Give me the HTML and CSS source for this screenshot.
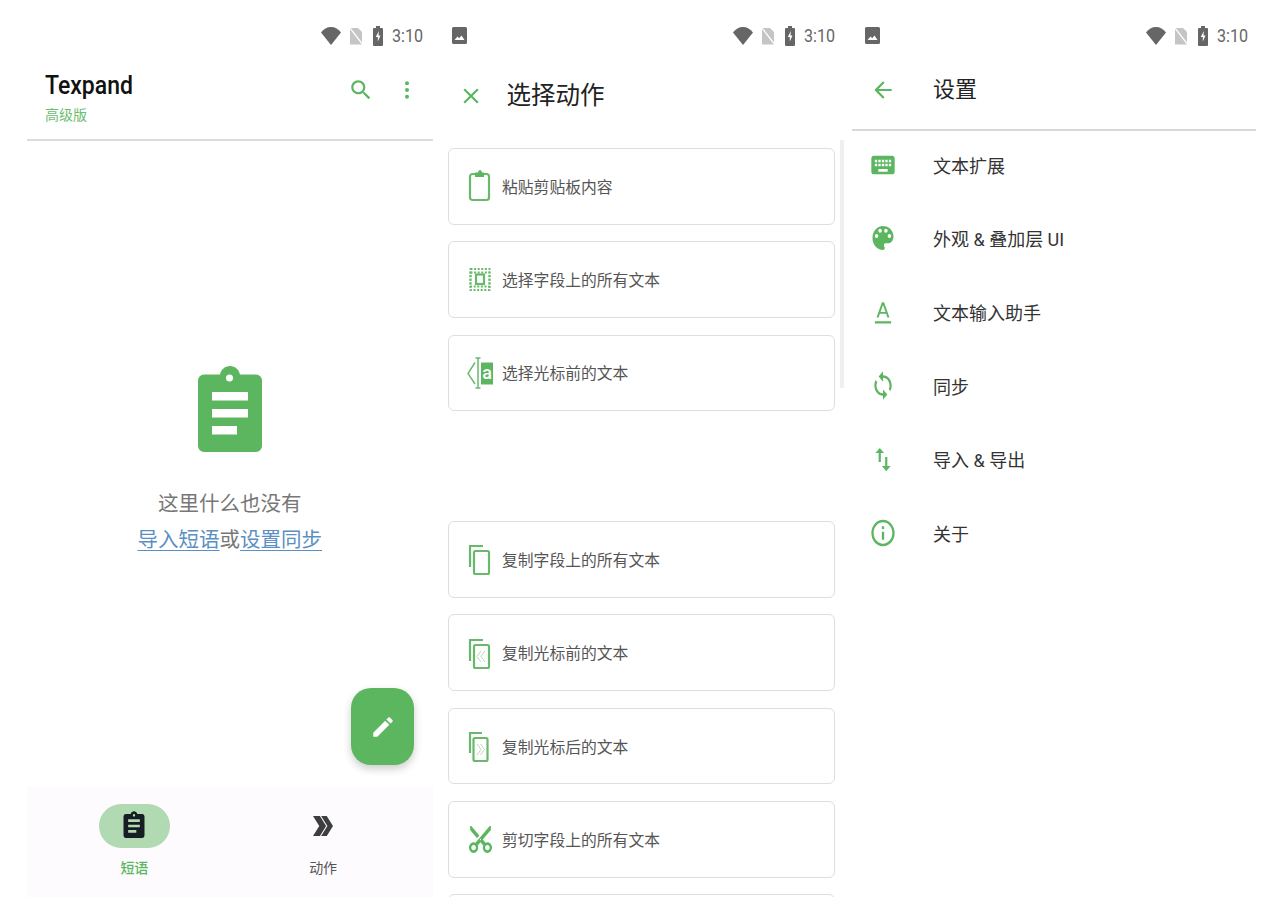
FILE: index.html
```html
<!DOCTYPE html>
<html lang="zh">
<head>
<meta charset="utf-8">
<title>Texpand</title>
<link rel="stylesheet" href="styles.css">
</head>
<body>
<svg class="defs" aria-hidden="true">
  <symbol id="wifi" viewBox="0 0 20 18"><path d="M10 18 0 5.500C2.600 2 6 0 10 0s7.400 2 10 5.500z"/></symbol>
  <symbol id="nosim" viewBox="0 0 14 18"><path d="M1 1h8l4 4v12.500H1z" opacity=".38"/><path d="M0 .8 1 0l13 16.800-1 .9z" fill="#fff"/></symbol>
  <symbol id="batt" viewBox="0 0 10 20"><path fill-rule="evenodd" d="M3 0h4v2h2a1 1 0 0 1 1 1v16a1 1 0 0 1-1 1H1a1 1 0 0 1-1-1V3a1 1 0 0 1 1-1h2zM5.800 5 2.800 11h2v4.500l2.700-6h-2z"/></symbol>
  <symbol id="image" viewBox="0 0 15 18"><path fill-rule="evenodd" d="M1.500 0h12A1.500 1.500 0 0 1 15 1.500v14a1.500 1.500 0 0 1-1.500 1.500h-12A1.500 1.500 0 0 1 0 15.500v-14A1.500 1.500 0 0 1 1.500 0zM2.500 13h10L9.500 8.500 7.200 11.300 5.500 9.500z"/></symbol>
</svg>

<main class="page">
  <section class="panel">
    <div class="status">
      <span class="status-left"></span>
      <svg class="s-wifi"><use href="#wifi"/></svg><svg class="s-sim"><use href="#nosim"/></svg><svg class="s-batt"><use href="#batt"/></svg><span class="time">3:10</span>
    </div>
    <header class="home-head">
      <div class="brand">
        <div class="brand-name">Texpand</div>
        <div class="brand-sub">高级版</div>
      </div>
      <svg class="head-icon" viewBox="0 0 24 24"><path d="M15.500 14h-.79l-.28-.27C15.410 12.590 16 11.110 16 9.500 16 5.910 13.090 3 9.500 3S3 5.910 3 9.500 5.910 16 9.500 16c1.610 0 3.090-.59 4.230-1.570l.27.28v.79l5 4.990L20.490 19l-4.990-5zm-6 0C7.010 14 5 11.990 5 9.500S7.010 5 9.500 5 14 7.010 14 9.500 11.990 14 9.500 14z"/></svg>
      <svg class="head-icon more" viewBox="0 0 24 24"><circle cx="12" cy="4" r="2.400"/><circle cx="12" cy="12" r="2.400"/><circle cx="12" cy="20" r="2.400"/></svg>
    </header>
    <div class="empty">
      <svg class="empty-icon" viewBox="0 0 64 86">
        <path class="g" d="M22 8.500C23 3.500 27 0 32 0s9 3.500 10 8.500H58a6 6 0 0 1 6 6V80a6 6 0 0 1-6 6H6a6 6 0 0 1-6-6V14.500a6 6 0 0 1 6-6z"/>
        <circle class="w" cx="31.500" cy="12" r="3.500"/>
        <rect class="w" x="14" y="26" width="36" height="8.500"/>
        <rect class="w" x="14" y="43" width="36" height="8.500"/>
        <rect class="w" x="14" y="60" width="25" height="8.500"/>
      </svg>
      <p class="empty-title">这里什么也没有</p>
      <p class="empty-links"><a class="link">导入短语</a>或<a class="link">设置同步</a></p>
    </div>
    <button class="fab" type="button" aria-label="编辑">
      <svg viewBox="0 0 24 24"><path d="M3 17.250V21h3.750L17.810 9.940l-3.750-3.750L3 17.250zM20.710 7.040c.39-.39.39-1.020 0-1.410l-2.340-2.340c-.39-.39-1.020-.39-1.410 0l-1.830 1.830 3.750 3.750 1.830-1.830z"/></svg>
    </button>
    <nav class="bottom-nav">
      <div class="nav-item active">
        <span class="pill"><svg class="tall" viewBox="0 0 24 24" preserveAspectRatio="none"><path d="M19 3h-4.180C14.400 1.840 13.300 1 12 1c-1.300 0-2.400.84-2.820 2H5c-1.100 0-2 .9-2 2v14c0 1.100.9 2 2 2h14c1.100 0 2-.9 2-2V5c0-1.100-.9-2-2-2zm-7 0c.55 0 1 .45 1 1s-.45 1-1 1-1-.45-1-1 .45-1 1-1zm2 14H7v-2h7v2zm3-4H7v-2h10v2zm0-4H7V7h10v2z"/></svg></span>
        <span class="nav-label">短语</span>
      </div>
      <div class="nav-item">
        <span class="pill"><svg viewBox="0 0 24 24"><path d="M4 4h5.500l5 8-5 8H4l5-8zM10.500 4H15l5 8-5 8h-4.500l5-8z"/></svg></span>
        <span class="nav-label">动作</span>
      </div>
    </nav>
  </section>

  <section class="panel">
    <div class="status">
      <svg class="s-image"><use href="#image"/></svg><span class="status-left"></span>
      <svg class="s-wifi"><use href="#wifi"/></svg><svg class="s-sim"><use href="#nosim"/></svg><svg class="s-batt"><use href="#batt"/></svg><span class="time">3:10</span>
    </div>
    <header class="action-head">
      <svg class="close" viewBox="0 0 24 24"><path d="M19 6.410L17.590 5 12 10.590 6.410 5 5 6.410 10.590 12 5 17.590 6.410 19 12 13.410 17.590 19 19 17.590 13.410 12z"/></svg>
      <h1 class="action-title">选择动作</h1>
    </header>
    <div class="scrollbar"></div>
    <div class="cards">
      <div class="card"><svg class="ci" viewBox="0 0 26 32"><rect class="st" x="3" y="4" width="19" height="26" rx="2.500"/><path class="fl" d="M8 2.500h3C11.300 1 12 0 13 0s1.700 1 2 2.500h2V7H8z"/></svg><span>粘贴剪贴板内容</span></div>
      <div class="card"><svg class="ci" viewBox="0 0 26 32"><rect class="dots" x="3.500" y="5" width="19" height="21"/><rect class="dots" x="3.500" y="8.500" width="19" height="14"/><rect class="st" x="9" y="10.500" width="8" height="9.500"/></svg><span>选择字段上的所有文本</span></div>
      <div class="card gap-after"><svg class="ci" viewBox="0 0 26 32"><path class="thin" d="M8 5.500 1 16.500 8 27"/><path class="st-thin" d="M11 1v30M8.500 1h5M8.500 31h5"/><rect class="fl" x="14" y="5.500" width="12" height="22"/><text class="ci-a" x="20" y="22">a</text></svg><span>选择光标前的文本</span></div>
      <div class="card"><svg class="ci" viewBox="0 0 26 32"><path class="st" d="M16 3H3v21"/><rect class="st" x="7" y="8" width="15" height="23" rx="1.500"/></svg><span>复制字段上的所有文本</span></div>
      <div class="card"><svg class="ci" viewBox="0 0 26 32"><path class="st" d="M16 3H3v21"/><rect class="st" x="7" y="8" width="15" height="23" rx="1.500"/><path class="hair" d="M14 14l-4 5.500 4 5.500M18 14l-4 5.500 4 5.500"/></svg><span>复制光标前的文本</span></div>
      <div class="card"><svg class="ci" viewBox="0 0 26 32"><path class="st" d="M15 3H3v20"/><rect class="st" x="6.500" y="8" width="14" height="23" rx="1.500"/><path class="hair" d="M10 14l4 5.500-4 5.500M13.500 14l4 5.500-4 5.500"/></svg><span>复制光标后的文本</span></div>
      <div class="card"><svg class="ci-cut" viewBox="2 2 20 20" preserveAspectRatio="none"><path class="fl" transform="rotate(-90 12 12)" d="M9.640 7.640c.23-.5.36-1.050.36-1.640 0-2.210-1.790-4-4-4S2 3.790 2 6s1.790 4 4 4c.59 0 1.140-.13 1.640-.36L10 12l-2.360 2.360C7.140 14.130 6.590 14 6 14c-2.210 0-4 1.790-4 4s1.790 4 4 4 4-1.790 4-4c0-.59-.13-1.140-.36-1.640L12 14l7 7h3v-1L9.640 7.640zM6 8c-1.100 0-2-.89-2-2s.9-2 2-2 2 .89 2 2-.9 2-2 2zm0 12c-1.100 0-2-.89-2-2s.9-2 2-2 2 .89 2 2-.9 2-2 2zm6-7.500c-.28 0-.5-.22-.5-.5s.22-.5.5-.5.5.22.5.5-.22.5-.5.5zM19 3l-6 6 2 2 7-7V3z"/></svg><span>剪切字段上的所有文本</span></div>
      <div class="card"></div>
    </div>
  </section>

  <section class="panel">
    <div class="status">
      <svg class="s-image"><use href="#image"/></svg><span class="status-left"></span>
      <svg class="s-wifi"><use href="#wifi"/></svg><svg class="s-sim"><use href="#nosim"/></svg><svg class="s-batt"><use href="#batt"/></svg><span class="time">3:10</span>
    </div>
    <header class="set-head">
      <svg class="si" viewBox="0 0 24 24"><path d="M20 11H7.830l5.590-5.590L12 4l-8 8 8 8 1.410-1.410L7.830 13H20v-2z"/></svg>
      <h1 class="set-title">设置</h1>
    </header>
    <ul class="settings">
      <li class="row"><svg class="si si-big" viewBox="0 0 24 24" preserveAspectRatio="none"><path d="M20 5H4c-1.100 0-1.990.9-1.990 2L2 17c0 1.100.9 2 2 2h16c1.100 0 2-.9 2-2V7c0-1.100-.9-2-2-2zm-9 3h2v2h-2V8zm0 3h2v2h-2v-2zM8 8h2v2H8V8zm0 3h2v2H8v-2zm-1 2H5v-2h2v2zm0-3H5V8h2v2zm9 7H8v-2h8v2zm0-4h-2v-2h2v2zm0-3h-2V8h2v2zm3 3h-2v-2h2v2zm0-3h-2V8h2v2z"/></svg><span>文本扩展</span></li>
      <li class="row"><svg class="si si-big" viewBox="0 0 24 24" preserveAspectRatio="none"><path d="M12 3c-4.970 0-9 4.030-9 9s4.030 9 9 9c.83 0 1.500-.67 1.500-1.500 0-.39-.15-.74-.39-1.010-.23-.26-.38-.61-.38-.99 0-.83.67-1.500 1.500-1.500H16c2.760 0 5-2.240 5-5 0-4.420-4.030-8-9-8zm-5.500 9c-.83 0-1.500-.67-1.500-1.500S5.670 9 6.500 9 8 9.670 8 10.500 7.330 12 6.500 12zm3-4C8.670 8 8 7.330 8 6.500S8.670 5 9.500 5s1.500.67 1.500 1.500S10.330 8 9.500 8zm5 0c-.83 0-1.500-.67-1.500-1.500S13.670 5 14.500 5s1.500.67 1.500 1.500S15.330 8 14.500 8zm3 4c-.83 0-1.500-.67-1.500-1.500S16.670 9 17.500 9s1.500.67 1.500 1.500-.67 1.500-1.500 1.500z"/></svg><span>外观 &amp; 叠加层 UI</span></li>
      <li class="row"><svg class="si" viewBox="0 0 24 24"><path d="M4.500 20.500h15v2h-15zM11 3h2l5 14h-2l-1.100-3.300H9.100L8 17H6zm-1.300 9h4.600L12 5.500z"/></svg><span>文本输入助手</span></li>
      <li class="row"><svg class="si si-tall" viewBox="0 0 24 24" preserveAspectRatio="none"><path d="M12 4V1L8 5l4 4V6c3.310 0 6 2.690 6 6 0 1.010-.25 1.970-.7 2.800l1.460 1.460C19.540 15.030 20 13.570 20 12c0-4.420-3.580-8-8-8zm0 14c-3.310 0-6-2.690-6-6 0-1.010.25-1.970.7-2.800L5.240 7.740C4.460 8.970 4 10.430 4 12c0 4.420 3.580 8 8 8v3l4-4-4-4v3z"/></svg><span>同步</span></li>
      <li class="row"><svg class="si si-tall" viewBox="0 0 24 24" preserveAspectRatio="none"><path d="M9 3L5 6.990h3V14h2V6.990h3L9 3zm7 14.010V10h-2v7.010h-3L15 21l4-3.990h-3z"/></svg><span>导入 &amp; 导出</span></li>
      <li class="row"><svg class="si si-big" viewBox="0 0 24 24" preserveAspectRatio="none"><path d="M11 7h2v2h-2zm0 4h2v6h-2zm1-9C6.480 2 2 6.480 2 12s4.480 10 10 10 10-4.480 10-10S17.520 2 12 2zm0 18c-4.410 0-8-3.590-8-8s3.590-8 8-8 8 3.590 8 8-3.590 8-8 8z"/></svg><span>关于</span></li>
    </ul>
  </section>
</main>
</body>
</html>
```

FILE: styles.css
```css
* { box-sizing: border-box; }
html, body { margin: 0; background: #fff; }
body {
  height: 924px;
  overflow: hidden;
  font-family: Roboto, "Noto Sans CJK SC", sans-serif;
  color: #222;
}
.defs { position: absolute; width: 0; height: 0; }
.page {
  display: grid;
  grid-template-columns: repeat(3, 405.5px);
  column-gap: 7px;
  padding-left: 27px;
}
.panel {
  position: relative;
  display: flex;
  flex-direction: column;
  height: 897px;
  overflow: hidden;
}
.status {
  display: flex;
  align-items: center;
  height: 24px;
  margin: 24px 0;
  padding: 0 10px 0 12.500px;
  fill: #666;
  flex: none;
}
.status-left { flex: 1; }
.s-image { width: 15px; height: 18px; }
.s-wifi { width: 20px; height: 18px; }
.s-sim { width: 14px; height: 18px; margin-left: 8px; }
.s-batt { width: 10px; height: 20px; margin-left: 10px; }
.time { width: 31px; margin-left: 9px; font-size: 17.500px; line-height: 24px; color: #666; white-space: nowrap; transform: scaleX(.92); transform-origin: left; }

/* home */
.home-head {
  display: flex;
  height: 70px;
  margin-top: -1px;
  padding: 0 16px 0 18px;
  border-bottom: 2px solid #dcdcdc;
  fill: #5cb660;
  flex: none;
  align-items: flex-start;
  gap: 23px;
}
.brand { flex: 1; padding-top: 0; }
.brand-name { font-size: 25px; font-weight: 500; line-height: 30px; color: #111; transform: scaleX(.92); transform-origin: left; }
.brand-sub { font-size: 14px; line-height: 20px; margin-top: 4px; color: #6cbd70; }
.head-icon { width: 26px; height: 26px; margin-top: 6px; }
.more { width: 20px; height: 24px; margin-top: 7px; }
.empty {
  flex: 1;
  display: flex;
  flex-direction: column;
  align-items: center;
  padding-top: 225px;
}
.empty-icon { width: 64px; height: 86px; margin-left: 1px; }
.g { fill: #5cb660; }
.w { fill: #fff; }
.empty-title, .empty-links { margin: 0; font-size: 20.500px; line-height: 36px; color: #777; white-space: nowrap; }
.empty-title { margin-top: 34px; }
.link { color: #5b8fc2; text-decoration: underline; text-underline-offset: 3px; text-decoration-thickness: 1px; }
.fab {
  position: absolute;
  left: 324px;
  top: 688px;
  width: 63px;
  height: 77px;
  padding: 0;
  border: 0;
  border-radius: 20px;
  background: #5cb660;
  box-shadow: 0 4px 8px rgba(0, 0, 0, .2);
  display: flex;
  align-items: center;
  justify-content: center;
}
.fab svg { width: 26px; height: 26px; fill: #fff; }
.bottom-nav {
  display: flex;
  height: 111px;
  padding: 18px 15px 0 13px;
  background: #fdfbfe;
  flex: none;
}
.nav-item {
  flex: 1;
  display: flex;
  flex-direction: column;
  align-items: center;
}
.pill {
  display: flex;
  align-items: center;
  justify-content: center;
  width: 71px;
  height: 44px;
  border-radius: 22px;
}
.pill svg { width: 30px; height: 30px; fill: #3e3e3e; }
.pill .tall { width: 28px; height: 32px; }
.active .pill { background: #b1dab3; }
.active .pill svg { fill: #181c24; }
.nav-label { margin-top: 10px; font-size: 14px; line-height: 20px; color: #555; }
.active .nav-label { color: #5cb660; font-weight: 500; }

/* actions */
.action-head {
  display: flex;
  align-items: center;
  height: 48px;
  padding-left: 18px;
  flex: none;
}
.close { width: 26px; height: 26px; fill: #5cb660; }
.action-title { margin: 0 0 0 23px; font-size: 24.500px; font-weight: 400; line-height: 48px; color: #222; }
.scrollbar {
  position: absolute;
  left: 400px;
  top: 140px;
  width: 4px;
  height: 248px;
  background: #efefef;
}
.cards {
  display: flex;
  flex-direction: column;
  gap: 16.700px;
  margin-top: 28px;
  padding: 0 10px 0 8.500px;
  flex: none;
}
.card {
  display: flex;
  align-items: center;
  gap: 9px;
  height: 76.600px;
  padding-left: 18px;
  border: 1px solid #dedede;
  border-radius: 6px;
  background: #fff;
  font-size: 15.800px;
  color: #555;
  white-space: nowrap;
  flex: none;
}
.gap-after { margin-bottom: 93.300px; }
.ci { width: 26px; height: 32px; flex: none; overflow: visible; }
.ci-cut { width: 23px; height: 27px; margin: 0 1px 0 2px; flex: none; }
.st { fill: none; stroke: #69b96c; stroke-width: 2.200; }
.st-thin { fill: none; stroke: #69b96c; stroke-width: 1.500; }
.thin { fill: none; stroke: #69b96c; stroke-width: 1.400; }
.hair { fill: none; stroke: #9ed0a0; stroke-width: .8; }
.fl { fill: #5cb660; }
.dots { fill: none; stroke: #69b96c; stroke-width: 2; stroke-dasharray: 2 1.600; }
.ci-a { font-size: 18px; font-family: Roboto, sans-serif; font-weight: 500; fill: #fff; text-anchor: middle; }

/* settings */
.set-head {
  display: flex;
  align-items: center;
  height: 59px;
  margin-right: 2px;
  padding: 0 0 22px 18px;
  border-bottom: 2px solid #d8d8d8;
  flex: none;
}
.si { width: 26px; height: 26px; fill: #5cb660; flex: none; overflow: visible; }
.si-tall { height: 31px; }
.si-big { width: 28px; height: 32px; margin: 0 -1px; }
.set-title { margin: 0 0 0 37px; font-size: 22px; font-weight: 400; line-height: 34px; color: #222; }
.settings { margin: -3px 0 0; padding: 0; list-style: none; }
.row {
  display: flex;
  align-items: center;
  gap: 37px;
  height: 73.600px;
  padding-left: 18px;
  font-size: 18px;
  color: #333;
  white-space: nowrap;
}
```
